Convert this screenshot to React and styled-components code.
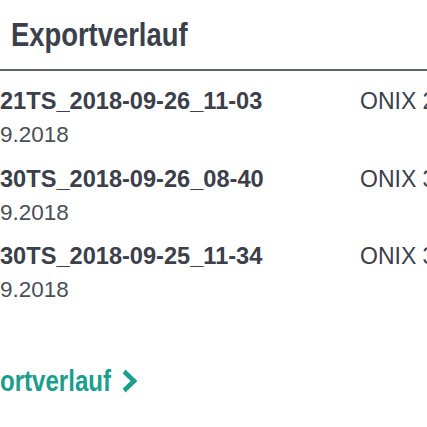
import React from "react";
import styled, { createGlobalStyle } from "styled-components";

const Global = createGlobalStyle`
  html, body { margin: 0; padding: 0; background: #ffffff; overflow: hidden; }
  body { width: 427px; height: 427px; }
`;

const Page = styled.div`
  width: 427px;
  height: 427px;
  overflow: hidden;
  font-family: "Liberation Sans", Arial, sans-serif;
  color: #3b404b;
`;

const Header = styled.header`
  padding: 15px 0 14px 11px;
  border-bottom: 2px solid #5f636a;
`;

/* Narrow bold headline face: Liberation Sans Bold compressed horizontally */
const Title = styled.h2`
  margin: 0;
  display: inline-block;
  font-family: "Liberation Sans Narrow", "Liberation Sans", Arial, sans-serif;
  font-weight: 700;
  font-size: 33px;
  line-height: 40px;
  color: #3b404b;
  transform: scaleX(0.83);
  transform-origin: left center;
`;

const List = styled.ul`
  list-style: none;
  margin: 0;
  padding: 13px 0 0 0;
  display: flex;
  flex-direction: column;
  gap: 9.5px;
`;

const Row = styled.li`
  display: grid;
  grid-template-columns: 360px 1fr;
  white-space: nowrap;
`;

const NameCell = styled.div`
  display: flex;
  flex-direction: column;
`;

const FileName = styled.span`
  font-weight: 700;
  font-size: 23.6px;
  line-height: 34px;
  color: #3b404b;
`;

const DateText = styled.span`
  font-size: 22.5px;
  line-height: 34px;
  color: #4a4f58;
`;

const Format = styled.span`
  font-size: 23px;
  line-height: 34px;
  color: #3b404b;
  overflow: hidden;
`;

const LinkRow = styled.a`
  display: inline-flex;
  align-items: center;
  gap: 12px;
  margin-top: 56px;
  font-family: "Liberation Sans Narrow", "Liberation Sans", Arial, sans-serif;
  font-weight: 700;
  font-size: 29px;
  line-height: 36px;
  color: #1a9e8e;
  text-decoration: none;
  white-space: nowrap;
  transform: scaleX(0.83);
  transform-origin: left center;
`;

const Chevron = () => (
  <svg width="20" height="24" viewBox="0 0 20 24" aria-hidden="true">
    <path d="M3.5 2.5 L15.5 12 L3.5 21.5" fill="none" stroke="#1a9e8e" strokeWidth="5" strokeLinecap="butt" strokeLinejoin="miter" />
  </svg>
);

const rows = [
  { name: "21TS_2018-09-26_11-03", date: "9.2018", format: "ONIX 2.1" },
  { name: "30TS_2018-09-26_08-40", date: "9.2018", format: "ONIX 3.0" },
  { name: "30TS_2018-09-25_11-34", date: "9.2018", format: "ONIX 3.0" },
];

export default function App() {
  return (
    <Page>
      <Global />
      <Header>
        <Title>Exportverlauf</Title>
      </Header>
      <List>
        {rows.map((r) => (
          <Row key={r.name}>
            <NameCell>
              <FileName>{r.name}</FileName>
              <DateText>{r.date}</DateText>
            </NameCell>
            <Format>{r.format}</Format>
          </Row>
        ))}
      </List>
      <LinkRow href="#">
        ortverlauf
        <Chevron />
      </LinkRow>
    </Page>
  );
}
